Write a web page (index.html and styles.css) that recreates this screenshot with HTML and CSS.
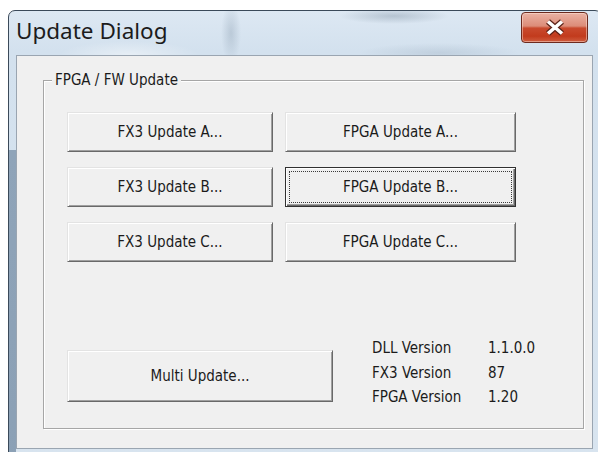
FILE: index.html
```html
<!DOCTYPE html>
<html lang="en">
<head>
<meta charset="utf-8">
<title>Update Dialog</title>
<link rel="stylesheet" href="styles.css">
</head>
<body>
<div class="window">
  <div class="titlebar">
    <span class="title">Update Dialog</span>
    <button class="close" aria-label="Close">
      <svg width="22" height="17" viewBox="0 0 22 17">
        <path d="M4 2.5 L18 14.5 M18 2.5 L4 14.5" stroke="#5b2218" stroke-width="6" fill="none"/>
        <path d="M4 2.5 L18 14.5 M18 2.5 L4 14.5" stroke="#ffffff" stroke-width="3.6" fill="none"/>
      </svg>
    </button>
  </div>
  <div class="client">
    <fieldset class="group">
      <legend class="group-title">FPGA / FW Update</legend>
      <div class="btn-grid">
        <button class="btn">FX3 Update A...</button>
        <button class="btn">FPGA Update A...</button>
        <button class="btn">FX3 Update B...</button>
        <button class="btn btn-default">FPGA Update B...</button>
        <button class="btn">FX3 Update C...</button>
        <button class="btn">FPGA Update C...</button>
      </div>
      <div class="bottom-row">
        <button class="btn btn-multi">Multi Update...</button>
        <dl class="versions">
          <dt>DLL Version</dt><dd>1.1.0.0</dd>
          <dt>FX3 Version</dt><dd>87</dd>
          <dt>FPGA Version</dt><dd>1.20</dd>
        </dl>
      </div>
    </fieldset>
  </div>
</div>
</body>
</html>
```

FILE: styles.css
```css
html, body {
  margin: 0;
  padding: 0;
  background: #ffffff;
  height: 452px;
  overflow: hidden;
}

/* Aero-style window frame */
.window {
  box-sizing: border-box;
  margin: 10px 0 0 8px;
  width: 594px;
  border: 1px solid #3b4a5a;
  border-radius: 7px 7px 0 0;
  padding: 0 8px 8px 7px;
  display: flex;
  flex-direction: column;
  background:
    linear-gradient(#8fa4b9, #8a9fb4) left 0 top 139px / 7px 100% no-repeat,
    radial-gradient(ellipse 55px 8px at 385px 5px, rgba(110, 128, 146, 0.35), transparent),
    radial-gradient(ellipse 10px 30px at 222px 22px, rgba(120, 140, 160, 0.30), transparent),
    radial-gradient(ellipse 80px 10px at 430px 42px, rgba(150, 168, 186, 0.30), transparent),
    radial-gradient(ellipse 70px 14px at 120px 44px, rgba(255, 255, 255, 0.45), transparent),
    linear-gradient(180deg, #dde8f3 0%, #d3e1ee 40px, #d8e4ef 100%);
}

.titlebar {
  height: 44px;
  display: flex;
  justify-content: space-between;
  align-items: flex-start;
}

.title {
  margin-top: 5px;
  font-family: "Noto Sans", "Open Sans", sans-serif;
  font-size: 22.5px;
  line-height: 30px;
  color: #1c1c1c;
}

.close {
  margin: 1px 5px 0 0;
  box-sizing: border-box;
  width: 67px;
  height: 31px;
  padding: 0;
  border: 1px solid #6d2a1e;
  border-radius: 4px;
  display: flex;
  align-items: center;
  justify-content: center;
  background: linear-gradient(180deg, #eab2a4 0%, #dc8c78 45%, #c94a2e 52%, #c23b1d 80%, #cf5d3f 100%);
  box-shadow: inset 0 0 0 1px rgba(255, 235, 225, 0.45);
}

.close svg {
  display: block;
}

/* Dialog client area */
.client {
  box-sizing: border-box;
  height: 394px;
  border: 1px solid #9aa5b1;
  background: #f0f0f0;
  padding: 16px 8px 19px 26px;
  display: flex;
  flex-direction: column;
}

.group {
  flex: 1;
  margin: 0;
  min-width: 0;
  padding: 24px 0 0 23px;
  border: 1px solid #a6a6a6;
  box-shadow: inset 1px 1px 0 #ffffff, 1px 1px 0 #ffffff;
  font-family: "DejaVu Sans Condensed", "DejaVu Sans", sans-serif;
  font-size: 15px;
  color: #1b1b1b;
}

.group-title {
  margin-left: -15px;
  padding: 0 3px;
  line-height: 16px;
  background: #f0f0f0;
}

.btn-grid {
  display: grid;
  grid-template-columns: 206px 231px;
  grid-auto-rows: 40px;
  column-gap: 12px;
  row-gap: 15px;
}

.btn {
  box-sizing: border-box;
  margin: 0;
  padding: 0;
  font: inherit;
  color: #1b1b1b;
  background: #f0f0f0;
  border: 1px solid;
  border-color: #e3e3e3 #696969 #696969 #e3e3e3;
  box-shadow: inset 1px 1px 0 #ffffff, inset -1px -1px 0 #a0a0a0;
  text-align: center;
}

.btn-default {
  border-color: #303030;
  box-shadow: inset 1px 1px 0 #ffffff, inset -1px -1px 0 #696969, inset -2px -2px 0 #a0a0a0;
  outline: 1px dotted #3a3a3a;
  outline-offset: -5px;
}

.bottom-row {
  margin-top: 74px;
  display: flex;
  align-items: flex-start;
}

.btn-multi {
  margin-top: 14px;
  width: 266px;
  height: 52px;
}

.versions {
  margin: 0 0 0 39px;
  display: grid;
  grid-template-columns: 116px auto;
  line-height: 24.5px;
}

.versions dt,
.versions dd {
  margin: 0;
}
```
